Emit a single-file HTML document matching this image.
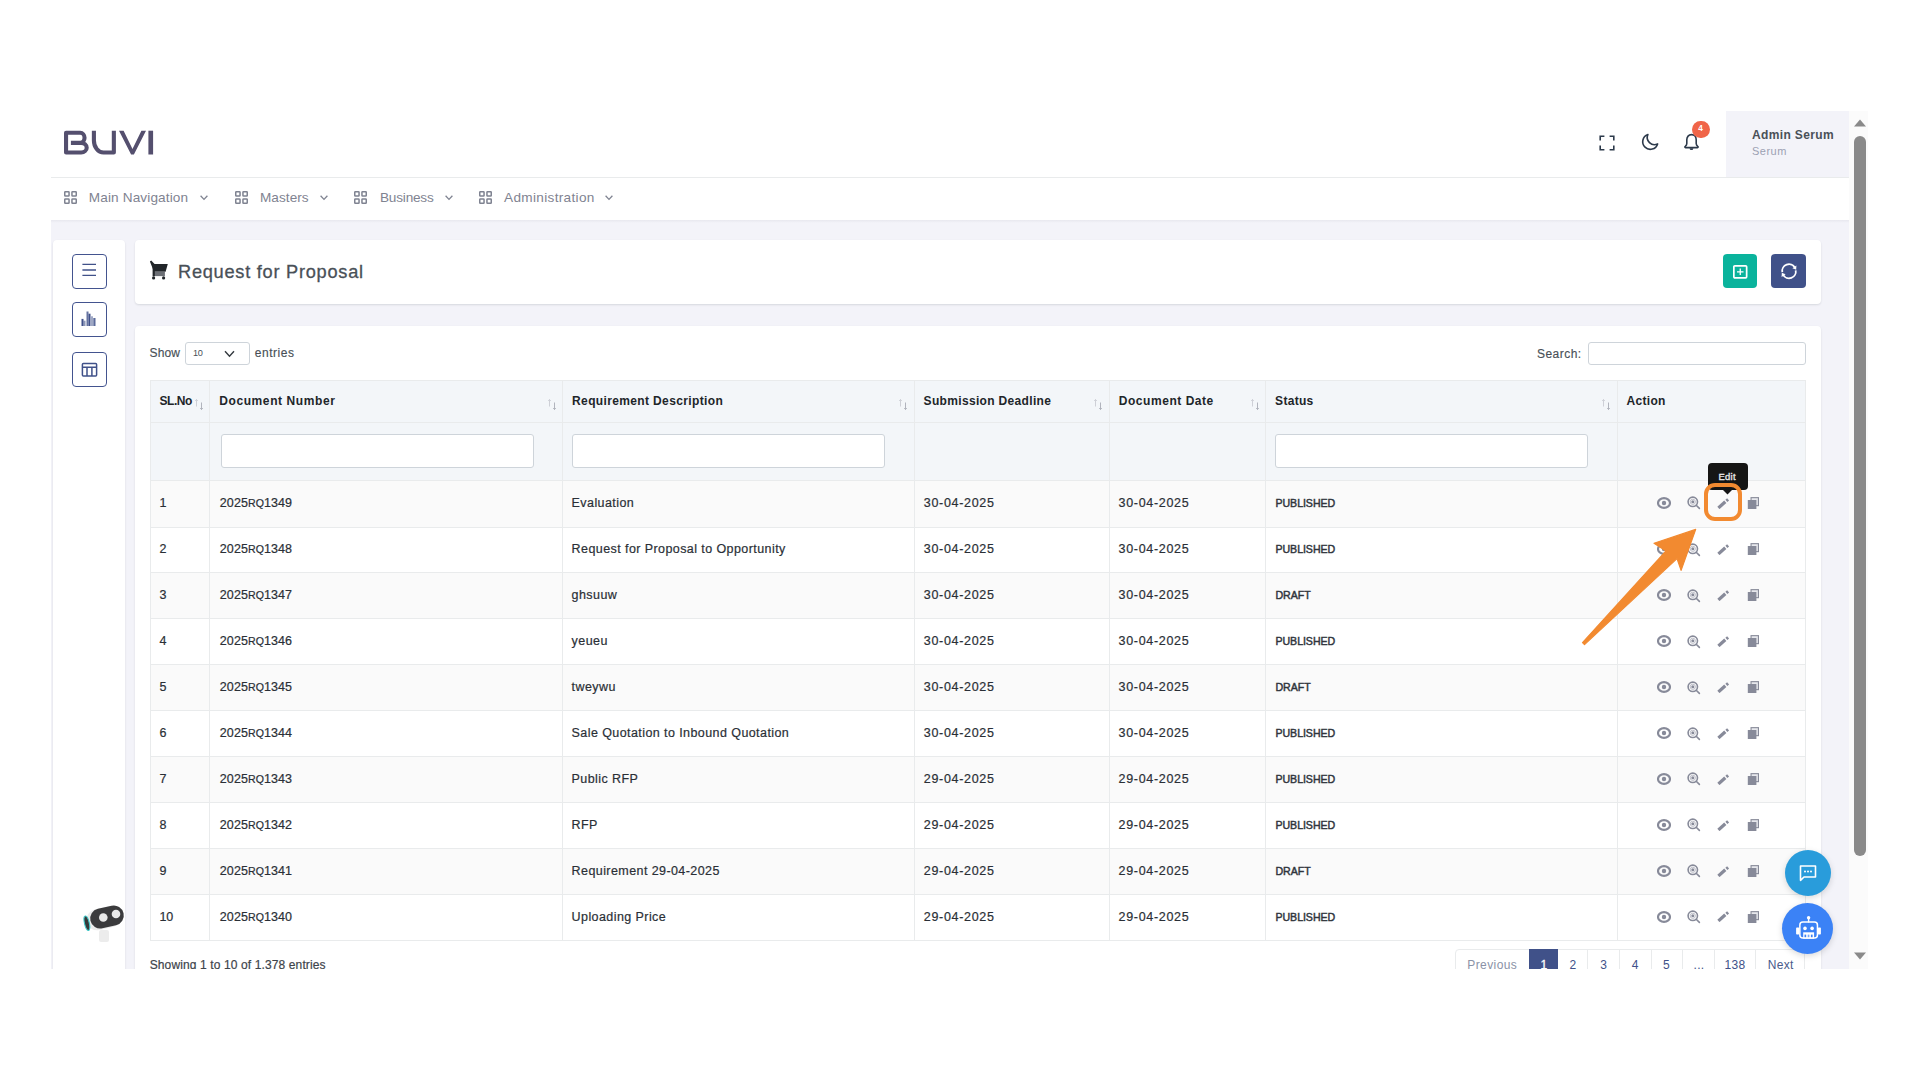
<!DOCTYPE html>
<html><head><meta charset="utf-8">
<style>
*{box-sizing:border-box;margin:0;padding:0}
html,body{width:1920px;height:1080px;overflow:hidden;background:#fff;font-family:"Liberation Sans",sans-serif}
.a{position:absolute}
.t{position:absolute;white-space:nowrap;font-family:"Liberation Sans",sans-serif}
#app{position:absolute;left:51px;top:111px;width:1798px;height:858px;overflow:hidden;background:#f3f3f9}
#track{position:absolute;left:1848.5px;top:111px;width:19px;height:858px;background:#fbfbfb}
</style></head>
<body>
<div id="app">
<div class="a" style="left:0.00px;top:0.00px;width:1798.00px;height:66.00px;background:#fff"></div>
<div class="a" style="left:0.00px;top:66.00px;width:1798.00px;height:1.00px;background:#e9ebec"></div>
<svg class="a" style="left:13.00px;top:19.00px" width="90" height="26" viewBox="0 0 90 26" ><g fill="none" stroke="#544f6e" stroke-width="4.1" stroke-linejoin="round">
<path d="M6.9 12.85H17.2A5.5 4.8 0 0 1 17.2 22.45H2.05V2.75H16.2A4.35 5.05 0 0 1 16.2 12.85"/>
<path d="M29.9 0.7V10.4A9.6 12.05 0 0 0 39.5 22.45H49.85V0.7"/>
</g><g fill="#544f6e">
<path d="M55 0.7h4.6l8.9 18.3l8.9-18.3h4.6L69.9 24.5h-2.8z"/>
<path d="M84.4 0.7h4.7v23.8h-4.7z"/>
</g></svg>
<svg class="a" style="left:1548.00px;top:24.00px" width="16" height="16" viewBox="0 0 16 16" ><path d="M1.2 5.4V1.2h4.2M10.6 1.2h4.2v4.2M14.8 10.6v4.2h-4.2M5.4 14.8H1.2v-4.2" fill="none" stroke="#2d3a4b" stroke-width="1.6"/></svg>
<svg class="a" style="left:1590.00px;top:22.00px" width="19" height="19" viewBox="0 0 19 19" ><path d="M6.9 1.5A7.6 7.6 0 1 0 16.6 10.9A7.2 7.2 0 0 1 6.9 1.5z" fill="none" stroke="#2d3a4b" stroke-width="1.6" stroke-linejoin="round"/></svg>
<svg class="a" style="left:1632.00px;top:22.00px" width="18" height="19" viewBox="0 0 18 19" ><path d="M8.5 1.6c2.9 0 4.7 2.3 4.7 5.2v3.6c0 1.2 0.6 2.2 1.6 2.9c0.6 0.4 0.4 1.3-0.3 1.3H2.5c-0.7 0-0.9-0.9-0.3-1.3c1-0.7 1.6-1.7 1.6-2.9V6.8c0-2.9 1.8-5.2 4.7-5.2z" fill="none" stroke="#2d3a4b" stroke-width="1.6" stroke-linejoin="round"/><path d="M6.6 15.2a1.9 1.9 0 0 0 3.8 0z" fill="#2d3a4b"/></svg>
<div class="a" style="left:1641.00px;top:9.50px;width:17.50px;height:17.50px;background:#f06548;border-radius:50%"></div>
<div class="t" style="left:1647.30px;top:14.26px;font-size:8.2px;line-height:8.2px;color:#fff;font-weight:700;letter-spacing:0px;">4</div>
<div class="a" style="left:1675.00px;top:0.00px;width:123.00px;height:66.00px;background:#f3f3f9"></div>
<div class="t" style="left:1701.00px;top:17.74px;font-size:12px;line-height:12px;color:#495057;font-weight:700;letter-spacing:0.36px;">Admin Serum</div>
<div class="t" style="left:1701.00px;top:35.19px;font-size:11px;line-height:11px;color:#9ca1b3;font-weight:400;letter-spacing:0.5px;">Serum</div>
<div class="a" style="left:0.00px;top:67.00px;width:1798.00px;height:42.00px;background:#fff"></div>
<svg class="a" style="left:13.00px;top:80.00px" width="13" height="13" viewBox="0 0 13 13" ><g fill="none" stroke="#7f8391" stroke-width="1.5"><rect x="0.75" y="0.75" width="4.3" height="4.3" rx="0.6"/><rect x="7.95" y="0.75" width="4.3" height="4.3" rx="0.6"/><rect x="0.75" y="7.95" width="4.3" height="4.3" rx="0.6"/><rect x="7.95" y="7.95" width="4.3" height="4.3" rx="0.6"/></g></svg>
<div class="t" style="left:37.80px;top:80.39px;font-size:13.6px;line-height:13.6px;color:#7f8391;font-weight:400;letter-spacing:0.13px;">Main Navigation</div>
<svg class="a" style="left:149.00px;top:84.00px" width="8" height="6" viewBox="0 0 8 6" ><path d="M0.6 0.8L4 4.4L7.4 0.8" fill="none" stroke="#7f8391" stroke-width="1.3"/></svg>
<svg class="a" style="left:184.00px;top:80.00px" width="13" height="13" viewBox="0 0 13 13" ><g fill="none" stroke="#7f8391" stroke-width="1.5"><rect x="0.75" y="0.75" width="4.3" height="4.3" rx="0.6"/><rect x="7.95" y="0.75" width="4.3" height="4.3" rx="0.6"/><rect x="0.75" y="7.95" width="4.3" height="4.3" rx="0.6"/><rect x="7.95" y="7.95" width="4.3" height="4.3" rx="0.6"/></g></svg>
<div class="t" style="left:209.00px;top:80.39px;font-size:13.6px;line-height:13.6px;color:#7f8391;font-weight:400;letter-spacing:0.05px;">Masters</div>
<svg class="a" style="left:269.40px;top:84.00px" width="8" height="6" viewBox="0 0 8 6" ><path d="M0.6 0.8L4 4.4L7.4 0.8" fill="none" stroke="#7f8391" stroke-width="1.3"/></svg>
<svg class="a" style="left:303.30px;top:80.00px" width="13" height="13" viewBox="0 0 13 13" ><g fill="none" stroke="#7f8391" stroke-width="1.5"><rect x="0.75" y="0.75" width="4.3" height="4.3" rx="0.6"/><rect x="7.95" y="0.75" width="4.3" height="4.3" rx="0.6"/><rect x="0.75" y="7.95" width="4.3" height="4.3" rx="0.6"/><rect x="7.95" y="7.95" width="4.3" height="4.3" rx="0.6"/></g></svg>
<div class="t" style="left:329.00px;top:80.39px;font-size:13.6px;line-height:13.6px;color:#7f8391;font-weight:400;letter-spacing:-0.2px;">Business</div>
<svg class="a" style="left:394.30px;top:84.00px" width="8" height="6" viewBox="0 0 8 6" ><path d="M0.6 0.8L4 4.4L7.4 0.8" fill="none" stroke="#7f8391" stroke-width="1.3"/></svg>
<svg class="a" style="left:428.30px;top:80.00px" width="13" height="13" viewBox="0 0 13 13" ><g fill="none" stroke="#7f8391" stroke-width="1.5"><rect x="0.75" y="0.75" width="4.3" height="4.3" rx="0.6"/><rect x="7.95" y="0.75" width="4.3" height="4.3" rx="0.6"/><rect x="0.75" y="7.95" width="4.3" height="4.3" rx="0.6"/><rect x="7.95" y="7.95" width="4.3" height="4.3" rx="0.6"/></g></svg>
<div class="t" style="left:453.00px;top:80.39px;font-size:13.6px;line-height:13.6px;color:#7f8391;font-weight:400;letter-spacing:0.33px;">Administration</div>
<svg class="a" style="left:554.40px;top:84.00px" width="8" height="6" viewBox="0 0 8 6" ><path d="M0.6 0.8L4 4.4L7.4 0.8" fill="none" stroke="#7f8391" stroke-width="1.3"/></svg>
<div class="a" style="left:0.00px;top:109.00px;width:1798.00px;height:3.00px;background:linear-gradient(#e8e8ef,#f3f3f9)"></div>
<div class="a" style="left:2.00px;top:129.00px;width:72.00px;height:760.00px;background:#fff;border-radius:4px 4px 0 0;box-shadow:0 1px 2px rgba(56,65,74,.15)"></div>
<div class="a" style="left:21.20px;top:143.00px;width:34.60px;height:34.50px;border:1.5px solid #43548f;border-radius:4px"></div>
<div class="a" style="left:21.20px;top:191.40px;width:34.60px;height:34.50px;border:1.5px solid #43548f;border-radius:4px"></div>
<div class="a" style="left:21.20px;top:241.20px;width:34.60px;height:34.50px;border:1.5px solid #43548f;border-radius:4px"></div>
<svg class="a" style="left:31.00px;top:152.00px" width="15" height="14" viewBox="0 0 15 14" ><g stroke="#405189" stroke-width="1.3"><path d="M0.4 1.4H14M0.4 7H14M0.4 12.4H14"/></g></svg>
<svg class="a" style="left:30.00px;top:200.00px" width="16" height="16" viewBox="0 0 16 16" ><g fill="#405189"><rect x="0.5" y="7.9" width="2" height="7.1"/><rect x="2.5" y="9.7" width="2" height="5.3" opacity=".6"/><rect x="5.5" y="0.5" width="2" height="14.5" opacity=".8"/><rect x="7.5" y="2.7" width="2" height="12.3"/><rect x="10" y="5.3" width="2" height="9.7" opacity=".5"/><rect x="12.3" y="7" width="2.2" height="8" opacity=".85"/></g></svg>
<svg class="a" style="left:30.00px;top:251.00px" width="17" height="15" viewBox="0 0 17 15" ><g fill="none" stroke="#405189" stroke-width="1.5"><rect x="1.4" y="1.4" width="14.2" height="12.6" rx="1"/><path d="M1.4 5.2H15.6M6 5.2V14M10.9 5.2V14"/></g></svg>
<svg class="a" style="left:29.00px;top:789.00px" width="48" height="46" viewBox="0 0 48 46" ><g transform="rotate(-13 27 17)">
<rect x="6" y="7" width="36" height="21" rx="10.5" fill="#ececec"/>
<rect x="10" y="7" width="34" height="20" rx="10" fill="#3b3b3d"/>
<ellipse cx="6" cy="18.5" rx="2.4" ry="7.4" fill="#36393a" stroke="#3cc8c8" stroke-width="1.1"/>
</g>
<circle cx="23.3" cy="17.5" r="4.3" fill="#eaeaea"/><circle cx="36" cy="14" r="4.3" fill="#eaeaea"/>
<rect x="19" y="30" width="10" height="12" rx="2" fill="#ececec"/></svg>
<div class="a" style="left:84.00px;top:129.00px;width:1686.00px;height:64.00px;background:#fff;border-radius:4px;box-shadow:0 1px 2px rgba(56,65,74,.15)"></div>
<svg class="a" style="left:98.00px;top:149.00px" width="20" height="20" viewBox="0 0 20 20" ><g fill="#212529"><path d="M0.9 1.6l1.3-1.1l3.4 3.6h13.2l-2.2 7.6H5z"/><path d="M4.6 11.5h11.3v4.6H4.6z" fill="#6c6f75"/><path d="M3.6 4h2.2v12.2H3.6z"/><circle cx="4.6" cy="17.9" r="1.6"/><circle cx="14.6" cy="17.9" r="1.6"/></g></svg>
<div class="t" style="left:127.00px;top:151.99px;font-size:18.2px;line-height:18.2px;color:#495057;font-weight:400;letter-spacing:0.75px;-webkit-text-stroke:0.3px #495057;">Request for Proposal</div>
<div class="a" style="left:1671.80px;top:143.00px;width:34.40px;height:34.40px;background:#0ab39c;border-radius:4px"></div>
<svg class="a" style="left:1680.00px;top:152.00px" width="18" height="18" viewBox="0 0 18 18" ><g fill="none" stroke="#fff" stroke-width="1.7"><rect x="2.85" y="2.85" width="12.8" height="12" rx="1"/></g><path d="M9.25 5.6v6.5M6 8.85h6.5" stroke="#fff" stroke-width="1.3"/></svg>
<div class="a" style="left:1720.20px;top:143.00px;width:34.40px;height:34.40px;background:#405189;border-radius:4px"></div>
<svg class="a" style="left:1729.00px;top:151.00px" width="18" height="18" viewBox="0 0 18 18" ><g fill="none" stroke="#fff" stroke-width="1.8"><path d="M2.3 10.2A6.8 6.8 0 0 1 14.9 5.6"/><path d="M15.7 8.3A6.8 6.8 0 0 1 3.1 12.9"/></g><path d="M16.4 3.4l-0.2 4.4l-3.8-1.6z" fill="#fff"/><path d="M1.6 15.1l0.2-4.4l3.8 1.6z" fill="#fff"/></svg>
<div class="a" style="left:84.00px;top:214.80px;width:1686.00px;height:674.20px;background:#fff;border-radius:4px 4px 0 0;box-shadow:0 1px 2px rgba(56,65,74,.15)"></div>
<div class="t" style="left:98.60px;top:236.24px;font-size:12px;line-height:12px;color:#495057;font-weight:400;letter-spacing:0.1px;-webkit-text-stroke:0.15px #495057;">Show</div>
<div class="a" style="left:133.70px;top:230.60px;width:65.70px;height:23.90px;border:1px solid #ced4da;border-radius:3px;background:#fff"></div>
<div class="t" style="left:142.00px;top:237.61px;font-size:9.2px;line-height:9.2px;color:#495057;font-weight:400;letter-spacing:-0.4px;">10</div>
<svg class="a" style="left:172.50px;top:238.50px" width="12" height="8" viewBox="0 0 12 8" ><path d="M1 1.2L5.5 6.2L10 1.2" fill="none" stroke="#343a40" stroke-width="1.4"/></svg>
<div class="t" style="left:203.80px;top:236.24px;font-size:12px;line-height:12px;color:#495057;font-weight:400;letter-spacing:0.52px;-webkit-text-stroke:0.15px #495057;">entries</div>
<div class="t" style="left:1486.00px;top:237.14px;font-size:12px;line-height:12px;color:#495057;font-weight:400;letter-spacing:0.47px;-webkit-text-stroke:0.15px #495057;">Search:</div>
<div class="a" style="left:1536.90px;top:230.60px;width:217.70px;height:23.90px;border:1px solid #ced4da;border-radius:3px;background:#fff"></div>
<div class="a" style="left:99.00px;top:269.40px;width:1655.60px;height:100.00px;background:#f3f6f9"></div>
<div class="a" style="left:99.00px;top:369.30px;width:1655.60px;height:46.70px;background:#fafafa"></div>
<div class="a" style="left:99.00px;top:416.00px;width:1655.60px;height:45.94px;background:#fff"></div>
<div class="a" style="left:99.00px;top:461.94px;width:1655.60px;height:45.94px;background:#fafafa"></div>
<div class="a" style="left:99.00px;top:507.88px;width:1655.60px;height:45.94px;background:#fff"></div>
<div class="a" style="left:99.00px;top:553.82px;width:1655.60px;height:45.94px;background:#fafafa"></div>
<div class="a" style="left:99.00px;top:599.76px;width:1655.60px;height:45.94px;background:#fff"></div>
<div class="a" style="left:99.00px;top:645.70px;width:1655.60px;height:45.94px;background:#fafafa"></div>
<div class="a" style="left:99.00px;top:691.64px;width:1655.60px;height:45.94px;background:#fff"></div>
<div class="a" style="left:99.00px;top:737.58px;width:1655.60px;height:45.94px;background:#fafafa"></div>
<div class="a" style="left:99.00px;top:783.52px;width:1655.60px;height:45.94px;background:#fff"></div>
<div class="a" style="left:99.00px;top:268.90px;width:1655.60px;height:1.00px;background:#e9ebec"></div>
<div class="a" style="left:99.00px;top:310.70px;width:1655.60px;height:1.00px;background:#e9ebec"></div>
<div class="a" style="left:99.00px;top:368.90px;width:1655.60px;height:1.00px;background:#e9ebec"></div>
<div class="a" style="left:99.00px;top:415.50px;width:1655.60px;height:1.00px;background:#e9ebec"></div>
<div class="a" style="left:99.00px;top:461.44px;width:1655.60px;height:1.00px;background:#e9ebec"></div>
<div class="a" style="left:99.00px;top:507.38px;width:1655.60px;height:1.00px;background:#e9ebec"></div>
<div class="a" style="left:99.00px;top:553.32px;width:1655.60px;height:1.00px;background:#e9ebec"></div>
<div class="a" style="left:99.00px;top:599.26px;width:1655.60px;height:1.00px;background:#e9ebec"></div>
<div class="a" style="left:99.00px;top:645.20px;width:1655.60px;height:1.00px;background:#e9ebec"></div>
<div class="a" style="left:99.00px;top:691.14px;width:1655.60px;height:1.00px;background:#e9ebec"></div>
<div class="a" style="left:99.00px;top:737.08px;width:1655.60px;height:1.00px;background:#e9ebec"></div>
<div class="a" style="left:99.00px;top:783.02px;width:1655.60px;height:1.00px;background:#e9ebec"></div>
<div class="a" style="left:99.00px;top:828.96px;width:1655.60px;height:1.00px;background:#e9ebec"></div>
<div class="a" style="left:98.50px;top:269.40px;width:1.00px;height:560.56px;background:#e9ebec"></div>
<div class="a" style="left:158.10px;top:269.40px;width:1.00px;height:560.56px;background:#e9ebec"></div>
<div class="a" style="left:511.00px;top:269.40px;width:1.00px;height:560.56px;background:#e9ebec"></div>
<div class="a" style="left:862.50px;top:269.40px;width:1.00px;height:560.56px;background:#e9ebec"></div>
<div class="a" style="left:1057.70px;top:269.40px;width:1.00px;height:560.56px;background:#e9ebec"></div>
<div class="a" style="left:1214.00px;top:269.40px;width:1.00px;height:560.56px;background:#e9ebec"></div>
<div class="a" style="left:1565.50px;top:269.40px;width:1.00px;height:560.56px;background:#e9ebec"></div>
<div class="a" style="left:1754.10px;top:269.40px;width:1.00px;height:560.56px;background:#e9ebec"></div>
<div class="t" style="left:108.60px;top:283.64px;font-size:12px;line-height:12px;color:#212529;font-weight:700;letter-spacing:-0.5px;">SL.No</div>
<div class="t" style="left:168.20px;top:283.64px;font-size:12px;line-height:12px;color:#212529;font-weight:700;letter-spacing:0.6px;">Document Number</div>
<div class="t" style="left:521.10px;top:283.64px;font-size:12px;line-height:12px;color:#212529;font-weight:700;letter-spacing:0.36px;">Requirement Description</div>
<div class="t" style="left:872.60px;top:283.64px;font-size:12px;line-height:12px;color:#212529;font-weight:700;letter-spacing:0.33px;">Submission Deadline</div>
<div class="t" style="left:1067.80px;top:283.64px;font-size:12px;line-height:12px;color:#212529;font-weight:700;letter-spacing:0.54px;">Document Date</div>
<div class="t" style="left:1224.10px;top:283.64px;font-size:12px;line-height:12px;color:#212529;font-weight:700;letter-spacing:0.3px;">Status</div>
<div class="t" style="left:1575.60px;top:283.64px;font-size:12px;line-height:12px;color:#212529;font-weight:700;letter-spacing:0.3px;">Action</div>
<svg class="a" style="left:142.60px;top:287.00px" width="10" height="13" viewBox="0 0 10 13" ><g stroke="#c9ccd3" stroke-width="0.9" fill="none"><path d="M2.5 8.5V1.5M1.2 2.9L2.5 1.5L3.8 2.9"/></g><g stroke="#a9adb6" stroke-width="0.9" fill="none"><path d="M7.5 4.5V11.5M6.2 10.1L7.5 11.5L8.8 10.1"/></g></svg>
<svg class="a" style="left:495.50px;top:287.00px" width="10" height="13" viewBox="0 0 10 13" ><g stroke="#c9ccd3" stroke-width="0.9" fill="none"><path d="M2.5 8.5V1.5M1.2 2.9L2.5 1.5L3.8 2.9"/></g><g stroke="#a9adb6" stroke-width="0.9" fill="none"><path d="M7.5 4.5V11.5M6.2 10.1L7.5 11.5L8.8 10.1"/></g></svg>
<svg class="a" style="left:847.00px;top:287.00px" width="10" height="13" viewBox="0 0 10 13" ><g stroke="#c9ccd3" stroke-width="0.9" fill="none"><path d="M2.5 8.5V1.5M1.2 2.9L2.5 1.5L3.8 2.9"/></g><g stroke="#a9adb6" stroke-width="0.9" fill="none"><path d="M7.5 4.5V11.5M6.2 10.1L7.5 11.5L8.8 10.1"/></g></svg>
<svg class="a" style="left:1042.20px;top:287.00px" width="10" height="13" viewBox="0 0 10 13" ><g stroke="#c9ccd3" stroke-width="0.9" fill="none"><path d="M2.5 8.5V1.5M1.2 2.9L2.5 1.5L3.8 2.9"/></g><g stroke="#a9adb6" stroke-width="0.9" fill="none"><path d="M7.5 4.5V11.5M6.2 10.1L7.5 11.5L8.8 10.1"/></g></svg>
<svg class="a" style="left:1198.50px;top:287.00px" width="10" height="13" viewBox="0 0 10 13" ><g stroke="#c9ccd3" stroke-width="0.9" fill="none"><path d="M2.5 8.5V1.5M1.2 2.9L2.5 1.5L3.8 2.9"/></g><g stroke="#a9adb6" stroke-width="0.9" fill="none"><path d="M7.5 4.5V11.5M6.2 10.1L7.5 11.5L8.8 10.1"/></g></svg>
<svg class="a" style="left:1550.00px;top:287.00px" width="10" height="13" viewBox="0 0 10 13" ><g stroke="#c9ccd3" stroke-width="0.9" fill="none"><path d="M2.5 8.5V1.5M1.2 2.9L2.5 1.5L3.8 2.9"/></g><g stroke="#a9adb6" stroke-width="0.9" fill="none"><path d="M7.5 4.5V11.5M6.2 10.1L7.5 11.5L8.8 10.1"/></g></svg>
<div class="a" style="left:169.60px;top:323.40px;width:313.00px;height:33.40px;border:1px solid #ced4da;border-radius:3px;background:#fff"></div>
<div class="a" style="left:521.00px;top:323.40px;width:313.00px;height:33.40px;border:1px solid #ced4da;border-radius:3px;background:#fff"></div>
<div class="a" style="left:1224.00px;top:323.40px;width:313.00px;height:33.40px;border:1px solid #ced4da;border-radius:3px;background:#fff"></div>
<div class="t" style="left:108.40px;top:385.77px;font-size:12.5px;line-height:12.5px;color:#2a2f36;font-weight:400;letter-spacing:0px;-webkit-text-stroke:0.2px #2a2f36;">1</div>
<div class="t" style="left:168.80px;top:385.77px;font-size:12.5px;line-height:12.5px;color:#2a2f36;letter-spacing:0.1px;-webkit-text-stroke:0.2px #2a2f36">2025<span style="font-size:10.6px;letter-spacing:0">RQ</span>1349</div>
<div class="t" style="left:520.60px;top:385.77px;font-size:12.5px;line-height:12.5px;color:#2a2f36;font-weight:400;letter-spacing:0.42px;-webkit-text-stroke:0.2px #2a2f36;">Evaluation</div>
<div class="t" style="left:872.80px;top:385.77px;font-size:12.5px;line-height:12.5px;color:#2a2f36;font-weight:400;letter-spacing:0.68px;-webkit-text-stroke:0.2px #2a2f36;">30-04-2025</div>
<div class="t" style="left:1067.60px;top:385.77px;font-size:12.5px;line-height:12.5px;color:#2a2f36;font-weight:400;letter-spacing:0.68px;-webkit-text-stroke:0.2px #2a2f36;">30-04-2025</div>
<div class="t" style="left:1224.50px;top:386.78px;font-size:10.6px;line-height:10.6px;color:#30353c;font-weight:400;letter-spacing:-0.05px;-webkit-text-stroke:0.45px #30353c;">PUBLISHED</div>
<svg class="a" style="left:1606.00px;top:386.15px" width="14" height="12" viewBox="0 0 14 12" ><ellipse cx="7" cy="6" rx="6" ry="4.9" fill="none" stroke="#878a99" stroke-width="2.2"/><circle cx="7" cy="6" r="2.2" fill="#878a99"/></svg>
<svg class="a" style="left:1636.00px;top:385.45px" width="14" height="14" viewBox="0 0 14 14" ><circle cx="5.8" cy="5.8" r="4.7" fill="none" stroke="#878a99" stroke-width="1.6"/><path d="M9.2 9.2L12.4 12.4" stroke="#878a99" stroke-width="1.6" stroke-linecap="round"/><circle cx="5.8" cy="5.8" r="2.6" fill="none" stroke="#b4b6c2" stroke-width="0.9"/><circle cx="5.8" cy="5.8" r="1.5" fill="#878a99"/></svg>
<svg class="a" style="left:1666.00px;top:384.65px" width="13" height="13" viewBox="0 0 13 13" ><path d="M1.4 11.9L8.3 5.8" stroke="#878a99" stroke-width="3.3"/><path d="M9.4 4.8L11.1 3.3" stroke="#878a99" stroke-width="3"/></svg>
<svg class="a" style="left:1696.00px;top:385.15px" width="13" height="14" viewBox="0 0 13 14" ><rect x="4.05" y="1.65" width="7.4" height="8" fill="#e6e7ec" stroke="#878a99" stroke-width="1.1"/><rect x="0.8" y="4" width="8.6" height="9" fill="#878a99"/></svg>
<div class="t" style="left:108.40px;top:432.09px;font-size:12.5px;line-height:12.5px;color:#2a2f36;font-weight:400;letter-spacing:0px;-webkit-text-stroke:0.2px #2a2f36;">2</div>
<div class="t" style="left:168.80px;top:432.09px;font-size:12.5px;line-height:12.5px;color:#2a2f36;letter-spacing:0.1px;-webkit-text-stroke:0.2px #2a2f36">2025<span style="font-size:10.6px;letter-spacing:0">RQ</span>1348</div>
<div class="t" style="left:520.60px;top:432.09px;font-size:12.5px;line-height:12.5px;color:#2a2f36;font-weight:400;letter-spacing:0.42px;-webkit-text-stroke:0.2px #2a2f36;">Request for Proposal to Opportunity</div>
<div class="t" style="left:872.80px;top:432.09px;font-size:12.5px;line-height:12.5px;color:#2a2f36;font-weight:400;letter-spacing:0.68px;-webkit-text-stroke:0.2px #2a2f36;">30-04-2025</div>
<div class="t" style="left:1067.60px;top:432.09px;font-size:12.5px;line-height:12.5px;color:#2a2f36;font-weight:400;letter-spacing:0.68px;-webkit-text-stroke:0.2px #2a2f36;">30-04-2025</div>
<div class="t" style="left:1224.50px;top:433.10px;font-size:10.6px;line-height:10.6px;color:#30353c;font-weight:400;letter-spacing:-0.05px;-webkit-text-stroke:0.45px #30353c;">PUBLISHED</div>
<svg class="a" style="left:1606.00px;top:432.47px" width="14" height="12" viewBox="0 0 14 12" ><ellipse cx="7" cy="6" rx="6" ry="4.9" fill="none" stroke="#878a99" stroke-width="2.2"/><circle cx="7" cy="6" r="2.2" fill="#878a99"/></svg>
<svg class="a" style="left:1636.00px;top:431.77px" width="14" height="14" viewBox="0 0 14 14" ><circle cx="5.8" cy="5.8" r="4.7" fill="none" stroke="#878a99" stroke-width="1.6"/><path d="M9.2 9.2L12.4 12.4" stroke="#878a99" stroke-width="1.6" stroke-linecap="round"/><circle cx="5.8" cy="5.8" r="2.6" fill="none" stroke="#b4b6c2" stroke-width="0.9"/><circle cx="5.8" cy="5.8" r="1.5" fill="#878a99"/></svg>
<svg class="a" style="left:1666.00px;top:430.97px" width="13" height="13" viewBox="0 0 13 13" ><path d="M1.4 11.9L8.3 5.8" stroke="#878a99" stroke-width="3.3"/><path d="M9.4 4.8L11.1 3.3" stroke="#878a99" stroke-width="3"/></svg>
<svg class="a" style="left:1696.00px;top:431.47px" width="13" height="14" viewBox="0 0 13 14" ><rect x="4.05" y="1.65" width="7.4" height="8" fill="#e6e7ec" stroke="#878a99" stroke-width="1.1"/><rect x="0.8" y="4" width="8.6" height="9" fill="#878a99"/></svg>
<div class="t" style="left:108.40px;top:478.03px;font-size:12.5px;line-height:12.5px;color:#2a2f36;font-weight:400;letter-spacing:0px;-webkit-text-stroke:0.2px #2a2f36;">3</div>
<div class="t" style="left:168.80px;top:478.03px;font-size:12.5px;line-height:12.5px;color:#2a2f36;letter-spacing:0.1px;-webkit-text-stroke:0.2px #2a2f36">2025<span style="font-size:10.6px;letter-spacing:0">RQ</span>1347</div>
<div class="t" style="left:520.60px;top:478.03px;font-size:12.5px;line-height:12.5px;color:#2a2f36;font-weight:400;letter-spacing:0.42px;-webkit-text-stroke:0.2px #2a2f36;">ghsuuw</div>
<div class="t" style="left:872.80px;top:478.03px;font-size:12.5px;line-height:12.5px;color:#2a2f36;font-weight:400;letter-spacing:0.68px;-webkit-text-stroke:0.2px #2a2f36;">30-04-2025</div>
<div class="t" style="left:1067.60px;top:478.03px;font-size:12.5px;line-height:12.5px;color:#2a2f36;font-weight:400;letter-spacing:0.68px;-webkit-text-stroke:0.2px #2a2f36;">30-04-2025</div>
<div class="t" style="left:1224.50px;top:479.04px;font-size:10.6px;line-height:10.6px;color:#30353c;font-weight:400;letter-spacing:-0.05px;-webkit-text-stroke:0.45px #30353c;">DRAFT</div>
<svg class="a" style="left:1606.00px;top:478.41px" width="14" height="12" viewBox="0 0 14 12" ><ellipse cx="7" cy="6" rx="6" ry="4.9" fill="none" stroke="#878a99" stroke-width="2.2"/><circle cx="7" cy="6" r="2.2" fill="#878a99"/></svg>
<svg class="a" style="left:1636.00px;top:477.71px" width="14" height="14" viewBox="0 0 14 14" ><circle cx="5.8" cy="5.8" r="4.7" fill="none" stroke="#878a99" stroke-width="1.6"/><path d="M9.2 9.2L12.4 12.4" stroke="#878a99" stroke-width="1.6" stroke-linecap="round"/><circle cx="5.8" cy="5.8" r="2.6" fill="none" stroke="#b4b6c2" stroke-width="0.9"/><circle cx="5.8" cy="5.8" r="1.5" fill="#878a99"/></svg>
<svg class="a" style="left:1666.00px;top:476.91px" width="13" height="13" viewBox="0 0 13 13" ><path d="M1.4 11.9L8.3 5.8" stroke="#878a99" stroke-width="3.3"/><path d="M9.4 4.8L11.1 3.3" stroke="#878a99" stroke-width="3"/></svg>
<svg class="a" style="left:1696.00px;top:477.41px" width="13" height="14" viewBox="0 0 13 14" ><rect x="4.05" y="1.65" width="7.4" height="8" fill="#e6e7ec" stroke="#878a99" stroke-width="1.1"/><rect x="0.8" y="4" width="8.6" height="9" fill="#878a99"/></svg>
<div class="t" style="left:108.40px;top:523.97px;font-size:12.5px;line-height:12.5px;color:#2a2f36;font-weight:400;letter-spacing:0px;-webkit-text-stroke:0.2px #2a2f36;">4</div>
<div class="t" style="left:168.80px;top:523.97px;font-size:12.5px;line-height:12.5px;color:#2a2f36;letter-spacing:0.1px;-webkit-text-stroke:0.2px #2a2f36">2025<span style="font-size:10.6px;letter-spacing:0">RQ</span>1346</div>
<div class="t" style="left:520.60px;top:523.97px;font-size:12.5px;line-height:12.5px;color:#2a2f36;font-weight:400;letter-spacing:0.42px;-webkit-text-stroke:0.2px #2a2f36;">yeueu</div>
<div class="t" style="left:872.80px;top:523.97px;font-size:12.5px;line-height:12.5px;color:#2a2f36;font-weight:400;letter-spacing:0.68px;-webkit-text-stroke:0.2px #2a2f36;">30-04-2025</div>
<div class="t" style="left:1067.60px;top:523.97px;font-size:12.5px;line-height:12.5px;color:#2a2f36;font-weight:400;letter-spacing:0.68px;-webkit-text-stroke:0.2px #2a2f36;">30-04-2025</div>
<div class="t" style="left:1224.50px;top:524.98px;font-size:10.6px;line-height:10.6px;color:#30353c;font-weight:400;letter-spacing:-0.05px;-webkit-text-stroke:0.45px #30353c;">PUBLISHED</div>
<svg class="a" style="left:1606.00px;top:524.35px" width="14" height="12" viewBox="0 0 14 12" ><ellipse cx="7" cy="6" rx="6" ry="4.9" fill="none" stroke="#878a99" stroke-width="2.2"/><circle cx="7" cy="6" r="2.2" fill="#878a99"/></svg>
<svg class="a" style="left:1636.00px;top:523.65px" width="14" height="14" viewBox="0 0 14 14" ><circle cx="5.8" cy="5.8" r="4.7" fill="none" stroke="#878a99" stroke-width="1.6"/><path d="M9.2 9.2L12.4 12.4" stroke="#878a99" stroke-width="1.6" stroke-linecap="round"/><circle cx="5.8" cy="5.8" r="2.6" fill="none" stroke="#b4b6c2" stroke-width="0.9"/><circle cx="5.8" cy="5.8" r="1.5" fill="#878a99"/></svg>
<svg class="a" style="left:1666.00px;top:522.85px" width="13" height="13" viewBox="0 0 13 13" ><path d="M1.4 11.9L8.3 5.8" stroke="#878a99" stroke-width="3.3"/><path d="M9.4 4.8L11.1 3.3" stroke="#878a99" stroke-width="3"/></svg>
<svg class="a" style="left:1696.00px;top:523.35px" width="13" height="14" viewBox="0 0 13 14" ><rect x="4.05" y="1.65" width="7.4" height="8" fill="#e6e7ec" stroke="#878a99" stroke-width="1.1"/><rect x="0.8" y="4" width="8.6" height="9" fill="#878a99"/></svg>
<div class="t" style="left:108.40px;top:569.91px;font-size:12.5px;line-height:12.5px;color:#2a2f36;font-weight:400;letter-spacing:0px;-webkit-text-stroke:0.2px #2a2f36;">5</div>
<div class="t" style="left:168.80px;top:569.91px;font-size:12.5px;line-height:12.5px;color:#2a2f36;letter-spacing:0.1px;-webkit-text-stroke:0.2px #2a2f36">2025<span style="font-size:10.6px;letter-spacing:0">RQ</span>1345</div>
<div class="t" style="left:520.60px;top:569.91px;font-size:12.5px;line-height:12.5px;color:#2a2f36;font-weight:400;letter-spacing:0.42px;-webkit-text-stroke:0.2px #2a2f36;">tweywu</div>
<div class="t" style="left:872.80px;top:569.91px;font-size:12.5px;line-height:12.5px;color:#2a2f36;font-weight:400;letter-spacing:0.68px;-webkit-text-stroke:0.2px #2a2f36;">30-04-2025</div>
<div class="t" style="left:1067.60px;top:569.91px;font-size:12.5px;line-height:12.5px;color:#2a2f36;font-weight:400;letter-spacing:0.68px;-webkit-text-stroke:0.2px #2a2f36;">30-04-2025</div>
<div class="t" style="left:1224.50px;top:570.92px;font-size:10.6px;line-height:10.6px;color:#30353c;font-weight:400;letter-spacing:-0.05px;-webkit-text-stroke:0.45px #30353c;">DRAFT</div>
<svg class="a" style="left:1606.00px;top:570.29px" width="14" height="12" viewBox="0 0 14 12" ><ellipse cx="7" cy="6" rx="6" ry="4.9" fill="none" stroke="#878a99" stroke-width="2.2"/><circle cx="7" cy="6" r="2.2" fill="#878a99"/></svg>
<svg class="a" style="left:1636.00px;top:569.59px" width="14" height="14" viewBox="0 0 14 14" ><circle cx="5.8" cy="5.8" r="4.7" fill="none" stroke="#878a99" stroke-width="1.6"/><path d="M9.2 9.2L12.4 12.4" stroke="#878a99" stroke-width="1.6" stroke-linecap="round"/><circle cx="5.8" cy="5.8" r="2.6" fill="none" stroke="#b4b6c2" stroke-width="0.9"/><circle cx="5.8" cy="5.8" r="1.5" fill="#878a99"/></svg>
<svg class="a" style="left:1666.00px;top:568.79px" width="13" height="13" viewBox="0 0 13 13" ><path d="M1.4 11.9L8.3 5.8" stroke="#878a99" stroke-width="3.3"/><path d="M9.4 4.8L11.1 3.3" stroke="#878a99" stroke-width="3"/></svg>
<svg class="a" style="left:1696.00px;top:569.29px" width="13" height="14" viewBox="0 0 13 14" ><rect x="4.05" y="1.65" width="7.4" height="8" fill="#e6e7ec" stroke="#878a99" stroke-width="1.1"/><rect x="0.8" y="4" width="8.6" height="9" fill="#878a99"/></svg>
<div class="t" style="left:108.40px;top:615.85px;font-size:12.5px;line-height:12.5px;color:#2a2f36;font-weight:400;letter-spacing:0px;-webkit-text-stroke:0.2px #2a2f36;">6</div>
<div class="t" style="left:168.80px;top:615.85px;font-size:12.5px;line-height:12.5px;color:#2a2f36;letter-spacing:0.1px;-webkit-text-stroke:0.2px #2a2f36">2025<span style="font-size:10.6px;letter-spacing:0">RQ</span>1344</div>
<div class="t" style="left:520.60px;top:615.85px;font-size:12.5px;line-height:12.5px;color:#2a2f36;font-weight:400;letter-spacing:0.42px;-webkit-text-stroke:0.2px #2a2f36;">Sale Quotation to Inbound Quotation</div>
<div class="t" style="left:872.80px;top:615.85px;font-size:12.5px;line-height:12.5px;color:#2a2f36;font-weight:400;letter-spacing:0.68px;-webkit-text-stroke:0.2px #2a2f36;">30-04-2025</div>
<div class="t" style="left:1067.60px;top:615.85px;font-size:12.5px;line-height:12.5px;color:#2a2f36;font-weight:400;letter-spacing:0.68px;-webkit-text-stroke:0.2px #2a2f36;">30-04-2025</div>
<div class="t" style="left:1224.50px;top:616.86px;font-size:10.6px;line-height:10.6px;color:#30353c;font-weight:400;letter-spacing:-0.05px;-webkit-text-stroke:0.45px #30353c;">PUBLISHED</div>
<svg class="a" style="left:1606.00px;top:616.23px" width="14" height="12" viewBox="0 0 14 12" ><ellipse cx="7" cy="6" rx="6" ry="4.9" fill="none" stroke="#878a99" stroke-width="2.2"/><circle cx="7" cy="6" r="2.2" fill="#878a99"/></svg>
<svg class="a" style="left:1636.00px;top:615.53px" width="14" height="14" viewBox="0 0 14 14" ><circle cx="5.8" cy="5.8" r="4.7" fill="none" stroke="#878a99" stroke-width="1.6"/><path d="M9.2 9.2L12.4 12.4" stroke="#878a99" stroke-width="1.6" stroke-linecap="round"/><circle cx="5.8" cy="5.8" r="2.6" fill="none" stroke="#b4b6c2" stroke-width="0.9"/><circle cx="5.8" cy="5.8" r="1.5" fill="#878a99"/></svg>
<svg class="a" style="left:1666.00px;top:614.73px" width="13" height="13" viewBox="0 0 13 13" ><path d="M1.4 11.9L8.3 5.8" stroke="#878a99" stroke-width="3.3"/><path d="M9.4 4.8L11.1 3.3" stroke="#878a99" stroke-width="3"/></svg>
<svg class="a" style="left:1696.00px;top:615.23px" width="13" height="14" viewBox="0 0 13 14" ><rect x="4.05" y="1.65" width="7.4" height="8" fill="#e6e7ec" stroke="#878a99" stroke-width="1.1"/><rect x="0.8" y="4" width="8.6" height="9" fill="#878a99"/></svg>
<div class="t" style="left:108.40px;top:661.79px;font-size:12.5px;line-height:12.5px;color:#2a2f36;font-weight:400;letter-spacing:0px;-webkit-text-stroke:0.2px #2a2f36;">7</div>
<div class="t" style="left:168.80px;top:661.79px;font-size:12.5px;line-height:12.5px;color:#2a2f36;letter-spacing:0.1px;-webkit-text-stroke:0.2px #2a2f36">2025<span style="font-size:10.6px;letter-spacing:0">RQ</span>1343</div>
<div class="t" style="left:520.60px;top:661.79px;font-size:12.5px;line-height:12.5px;color:#2a2f36;font-weight:400;letter-spacing:0.42px;-webkit-text-stroke:0.2px #2a2f36;">Public RFP</div>
<div class="t" style="left:872.80px;top:661.79px;font-size:12.5px;line-height:12.5px;color:#2a2f36;font-weight:400;letter-spacing:0.68px;-webkit-text-stroke:0.2px #2a2f36;">29-04-2025</div>
<div class="t" style="left:1067.60px;top:661.79px;font-size:12.5px;line-height:12.5px;color:#2a2f36;font-weight:400;letter-spacing:0.68px;-webkit-text-stroke:0.2px #2a2f36;">29-04-2025</div>
<div class="t" style="left:1224.50px;top:662.80px;font-size:10.6px;line-height:10.6px;color:#30353c;font-weight:400;letter-spacing:-0.05px;-webkit-text-stroke:0.45px #30353c;">PUBLISHED</div>
<svg class="a" style="left:1606.00px;top:662.17px" width="14" height="12" viewBox="0 0 14 12" ><ellipse cx="7" cy="6" rx="6" ry="4.9" fill="none" stroke="#878a99" stroke-width="2.2"/><circle cx="7" cy="6" r="2.2" fill="#878a99"/></svg>
<svg class="a" style="left:1636.00px;top:661.47px" width="14" height="14" viewBox="0 0 14 14" ><circle cx="5.8" cy="5.8" r="4.7" fill="none" stroke="#878a99" stroke-width="1.6"/><path d="M9.2 9.2L12.4 12.4" stroke="#878a99" stroke-width="1.6" stroke-linecap="round"/><circle cx="5.8" cy="5.8" r="2.6" fill="none" stroke="#b4b6c2" stroke-width="0.9"/><circle cx="5.8" cy="5.8" r="1.5" fill="#878a99"/></svg>
<svg class="a" style="left:1666.00px;top:660.67px" width="13" height="13" viewBox="0 0 13 13" ><path d="M1.4 11.9L8.3 5.8" stroke="#878a99" stroke-width="3.3"/><path d="M9.4 4.8L11.1 3.3" stroke="#878a99" stroke-width="3"/></svg>
<svg class="a" style="left:1696.00px;top:661.17px" width="13" height="14" viewBox="0 0 13 14" ><rect x="4.05" y="1.65" width="7.4" height="8" fill="#e6e7ec" stroke="#878a99" stroke-width="1.1"/><rect x="0.8" y="4" width="8.6" height="9" fill="#878a99"/></svg>
<div class="t" style="left:108.40px;top:707.73px;font-size:12.5px;line-height:12.5px;color:#2a2f36;font-weight:400;letter-spacing:0px;-webkit-text-stroke:0.2px #2a2f36;">8</div>
<div class="t" style="left:168.80px;top:707.73px;font-size:12.5px;line-height:12.5px;color:#2a2f36;letter-spacing:0.1px;-webkit-text-stroke:0.2px #2a2f36">2025<span style="font-size:10.6px;letter-spacing:0">RQ</span>1342</div>
<div class="t" style="left:520.60px;top:707.73px;font-size:12.5px;line-height:12.5px;color:#2a2f36;font-weight:400;letter-spacing:0.42px;-webkit-text-stroke:0.2px #2a2f36;">RFP</div>
<div class="t" style="left:872.80px;top:707.73px;font-size:12.5px;line-height:12.5px;color:#2a2f36;font-weight:400;letter-spacing:0.68px;-webkit-text-stroke:0.2px #2a2f36;">29-04-2025</div>
<div class="t" style="left:1067.60px;top:707.73px;font-size:12.5px;line-height:12.5px;color:#2a2f36;font-weight:400;letter-spacing:0.68px;-webkit-text-stroke:0.2px #2a2f36;">29-04-2025</div>
<div class="t" style="left:1224.50px;top:708.74px;font-size:10.6px;line-height:10.6px;color:#30353c;font-weight:400;letter-spacing:-0.05px;-webkit-text-stroke:0.45px #30353c;">PUBLISHED</div>
<svg class="a" style="left:1606.00px;top:708.11px" width="14" height="12" viewBox="0 0 14 12" ><ellipse cx="7" cy="6" rx="6" ry="4.9" fill="none" stroke="#878a99" stroke-width="2.2"/><circle cx="7" cy="6" r="2.2" fill="#878a99"/></svg>
<svg class="a" style="left:1636.00px;top:707.41px" width="14" height="14" viewBox="0 0 14 14" ><circle cx="5.8" cy="5.8" r="4.7" fill="none" stroke="#878a99" stroke-width="1.6"/><path d="M9.2 9.2L12.4 12.4" stroke="#878a99" stroke-width="1.6" stroke-linecap="round"/><circle cx="5.8" cy="5.8" r="2.6" fill="none" stroke="#b4b6c2" stroke-width="0.9"/><circle cx="5.8" cy="5.8" r="1.5" fill="#878a99"/></svg>
<svg class="a" style="left:1666.00px;top:706.61px" width="13" height="13" viewBox="0 0 13 13" ><path d="M1.4 11.9L8.3 5.8" stroke="#878a99" stroke-width="3.3"/><path d="M9.4 4.8L11.1 3.3" stroke="#878a99" stroke-width="3"/></svg>
<svg class="a" style="left:1696.00px;top:707.11px" width="13" height="14" viewBox="0 0 13 14" ><rect x="4.05" y="1.65" width="7.4" height="8" fill="#e6e7ec" stroke="#878a99" stroke-width="1.1"/><rect x="0.8" y="4" width="8.6" height="9" fill="#878a99"/></svg>
<div class="t" style="left:108.40px;top:753.67px;font-size:12.5px;line-height:12.5px;color:#2a2f36;font-weight:400;letter-spacing:0px;-webkit-text-stroke:0.2px #2a2f36;">9</div>
<div class="t" style="left:168.80px;top:753.67px;font-size:12.5px;line-height:12.5px;color:#2a2f36;letter-spacing:0.1px;-webkit-text-stroke:0.2px #2a2f36">2025<span style="font-size:10.6px;letter-spacing:0">RQ</span>1341</div>
<div class="t" style="left:520.60px;top:753.67px;font-size:12.5px;line-height:12.5px;color:#2a2f36;font-weight:400;letter-spacing:0.42px;-webkit-text-stroke:0.2px #2a2f36;">Requirement 29-04-2025</div>
<div class="t" style="left:872.80px;top:753.67px;font-size:12.5px;line-height:12.5px;color:#2a2f36;font-weight:400;letter-spacing:0.68px;-webkit-text-stroke:0.2px #2a2f36;">29-04-2025</div>
<div class="t" style="left:1067.60px;top:753.67px;font-size:12.5px;line-height:12.5px;color:#2a2f36;font-weight:400;letter-spacing:0.68px;-webkit-text-stroke:0.2px #2a2f36;">29-04-2025</div>
<div class="t" style="left:1224.50px;top:754.68px;font-size:10.6px;line-height:10.6px;color:#30353c;font-weight:400;letter-spacing:-0.05px;-webkit-text-stroke:0.45px #30353c;">DRAFT</div>
<svg class="a" style="left:1606.00px;top:754.05px" width="14" height="12" viewBox="0 0 14 12" ><ellipse cx="7" cy="6" rx="6" ry="4.9" fill="none" stroke="#878a99" stroke-width="2.2"/><circle cx="7" cy="6" r="2.2" fill="#878a99"/></svg>
<svg class="a" style="left:1636.00px;top:753.35px" width="14" height="14" viewBox="0 0 14 14" ><circle cx="5.8" cy="5.8" r="4.7" fill="none" stroke="#878a99" stroke-width="1.6"/><path d="M9.2 9.2L12.4 12.4" stroke="#878a99" stroke-width="1.6" stroke-linecap="round"/><circle cx="5.8" cy="5.8" r="2.6" fill="none" stroke="#b4b6c2" stroke-width="0.9"/><circle cx="5.8" cy="5.8" r="1.5" fill="#878a99"/></svg>
<svg class="a" style="left:1666.00px;top:752.55px" width="13" height="13" viewBox="0 0 13 13" ><path d="M1.4 11.9L8.3 5.8" stroke="#878a99" stroke-width="3.3"/><path d="M9.4 4.8L11.1 3.3" stroke="#878a99" stroke-width="3"/></svg>
<svg class="a" style="left:1696.00px;top:753.05px" width="13" height="14" viewBox="0 0 13 14" ><rect x="4.05" y="1.65" width="7.4" height="8" fill="#e6e7ec" stroke="#878a99" stroke-width="1.1"/><rect x="0.8" y="4" width="8.6" height="9" fill="#878a99"/></svg>
<div class="t" style="left:108.40px;top:799.61px;font-size:12.5px;line-height:12.5px;color:#2a2f36;font-weight:400;letter-spacing:0px;-webkit-text-stroke:0.2px #2a2f36;">10</div>
<div class="t" style="left:168.80px;top:799.61px;font-size:12.5px;line-height:12.5px;color:#2a2f36;letter-spacing:0.1px;-webkit-text-stroke:0.2px #2a2f36">2025<span style="font-size:10.6px;letter-spacing:0">RQ</span>1340</div>
<div class="t" style="left:520.60px;top:799.61px;font-size:12.5px;line-height:12.5px;color:#2a2f36;font-weight:400;letter-spacing:0.42px;-webkit-text-stroke:0.2px #2a2f36;">Uploading Price</div>
<div class="t" style="left:872.80px;top:799.61px;font-size:12.5px;line-height:12.5px;color:#2a2f36;font-weight:400;letter-spacing:0.68px;-webkit-text-stroke:0.2px #2a2f36;">29-04-2025</div>
<div class="t" style="left:1067.60px;top:799.61px;font-size:12.5px;line-height:12.5px;color:#2a2f36;font-weight:400;letter-spacing:0.68px;-webkit-text-stroke:0.2px #2a2f36;">29-04-2025</div>
<div class="t" style="left:1224.50px;top:800.62px;font-size:10.6px;line-height:10.6px;color:#30353c;font-weight:400;letter-spacing:-0.05px;-webkit-text-stroke:0.45px #30353c;">PUBLISHED</div>
<svg class="a" style="left:1606.00px;top:799.99px" width="14" height="12" viewBox="0 0 14 12" ><ellipse cx="7" cy="6" rx="6" ry="4.9" fill="none" stroke="#878a99" stroke-width="2.2"/><circle cx="7" cy="6" r="2.2" fill="#878a99"/></svg>
<svg class="a" style="left:1636.00px;top:799.29px" width="14" height="14" viewBox="0 0 14 14" ><circle cx="5.8" cy="5.8" r="4.7" fill="none" stroke="#878a99" stroke-width="1.6"/><path d="M9.2 9.2L12.4 12.4" stroke="#878a99" stroke-width="1.6" stroke-linecap="round"/><circle cx="5.8" cy="5.8" r="2.6" fill="none" stroke="#b4b6c2" stroke-width="0.9"/><circle cx="5.8" cy="5.8" r="1.5" fill="#878a99"/></svg>
<svg class="a" style="left:1666.00px;top:798.49px" width="13" height="13" viewBox="0 0 13 13" ><path d="M1.4 11.9L8.3 5.8" stroke="#878a99" stroke-width="3.3"/><path d="M9.4 4.8L11.1 3.3" stroke="#878a99" stroke-width="3"/></svg>
<svg class="a" style="left:1696.00px;top:798.99px" width="13" height="14" viewBox="0 0 13 14" ><rect x="4.05" y="1.65" width="7.4" height="8" fill="#e6e7ec" stroke="#878a99" stroke-width="1.1"/><rect x="0.8" y="4" width="8.6" height="9" fill="#878a99"/></svg>
<div class="a" style="left:1656.80px;top:352.10px;width:40.20px;height:27.20px;background:#151515;border-radius:4px"></div>
<svg class="a" style="left:1671.50px;top:379.00px" width="9" height="5" viewBox="0 0 9 5" ><path d="M0 0h9L4.5 4.5z" fill="#151515"/></svg>
<div class="t" style="left:1667.40px;top:360.64px;font-size:9.4px;line-height:9.4px;color:#e8e8e8;font-weight:400;letter-spacing:0.35px;-webkit-text-stroke:0.35px #e8e8e8;">Edit</div>
<div class="a" style="left:1652.60px;top:371.90px;width:38.20px;height:38.50px;border:4.8px solid #f28a30;border-radius:11px"></div>
<svg class="a" style="left:1519.00px;top:409.00px" width="140" height="135" viewBox="0 0 140 135" ><path d="M12.5 122.6L96 31L84 23.3L125.7 9.4L111.1 50.4L107 38.6L14.5 124.6z" fill="#f28a30" stroke="#f28a30" stroke-width="1.2" stroke-linejoin="round"/></svg>
<div class="t" style="left:98.70px;top:848.14px;font-size:12px;line-height:12px;color:#3d444b;font-weight:400;letter-spacing:0.12px;-webkit-text-stroke:0.2px #3d444b;">Showing 1 to 10 of 1,378 entries</div>
<div class="a" style="left:1404.40px;top:837.90px;width:349.40px;height:51.10px;border:1px solid #e9ebec;border-radius:4px 4px 0 0;background:#fff"></div>
<div class="a" style="left:1478.00px;top:837.50px;width:29.20px;height:51.50px;background:#405189"></div>
<div class="a" style="left:1536.00px;top:837.90px;width:1.00px;height:51.10px;background:#e9ebec"></div>
<div class="a" style="left:1567.50px;top:837.90px;width:1.00px;height:51.10px;background:#e9ebec"></div>
<div class="a" style="left:1599.50px;top:837.90px;width:1.00px;height:51.10px;background:#e9ebec"></div>
<div class="a" style="left:1630.50px;top:837.90px;width:1.00px;height:51.10px;background:#e9ebec"></div>
<div class="a" style="left:1662.50px;top:837.90px;width:1.00px;height:51.10px;background:#e9ebec"></div>
<div class="a" style="left:1703.70px;top:837.90px;width:1.00px;height:51.10px;background:#e9ebec"></div>
<div class="t" style="left:1416.30px;top:847.64px;font-size:12px;line-height:12px;color:#8a92a6;font-weight:400;letter-spacing:0.4px;">Previous</div>
<div class="t" style="left:1489.40px;top:847.64px;font-size:12px;line-height:12px;color:#fff;font-weight:400;letter-spacing:0px;-webkit-text-stroke:0.3px #fff;">1</div>
<div class="t" style="left:1518.50px;top:847.64px;font-size:12px;line-height:12px;color:#405189;font-weight:400;letter-spacing:0.3px;">2</div>
<div class="t" style="left:1549.30px;top:847.64px;font-size:12px;line-height:12px;color:#405189;font-weight:400;letter-spacing:0.3px;">3</div>
<div class="t" style="left:1580.80px;top:847.64px;font-size:12px;line-height:12px;color:#405189;font-weight:400;letter-spacing:0.3px;">4</div>
<div class="t" style="left:1612.00px;top:847.64px;font-size:12px;line-height:12px;color:#405189;font-weight:400;letter-spacing:0.3px;">5</div>
<div class="t" style="left:1642.50px;top:847.64px;font-size:12px;line-height:12px;color:#405189;font-weight:400;letter-spacing:0.3px;">...</div>
<div class="t" style="left:1673.60px;top:847.64px;font-size:12px;line-height:12px;color:#405189;font-weight:400;letter-spacing:0.3px;">138</div>
<div class="t" style="left:1716.70px;top:847.64px;font-size:12px;line-height:12px;color:#495b8a;font-weight:400;letter-spacing:0.3px;">Next</div>
<div class="a" style="left:1734.00px;top:739.20px;width:46.00px;height:45.80px;background:#299cdb;border-radius:50%;box-shadow:0 2px 6px rgba(0,0,0,.15)"></div>
<svg class="a" style="left:1746.00px;top:751.00px" width="22" height="22" viewBox="0 0 22 22" ><path d="M3.5 4h15v11H7l-3.5 3.3z" fill="none" stroke="#fff" stroke-width="1.6" stroke-linejoin="round"/><circle cx="8" cy="9.5" r="1" fill="#fff"/><circle cx="11" cy="9.5" r="1" fill="#fff"/><circle cx="14" cy="9.5" r="1" fill="#fff"/></svg>
<div class="a" style="left:1731.00px;top:791.60px;width:51.20px;height:51.10px;background:#3b82f6;border-radius:50%;box-shadow:0 2px 6px rgba(0,0,0,.15)"></div>
<svg class="a" style="left:1744.00px;top:804.00px" width="26" height="26" viewBox="0 0 26 26" ><g fill="none" stroke="#fff" stroke-width="1.5"><rect x="4.85" y="7.05" width="17.6" height="15.9" rx="3"/></g><g fill="#fff"><rect x="1.1" y="12.6" width="3.2" height="6.9" rx="0.8"/><rect x="22.9" y="12.6" width="3" height="6.9" rx="0.8"/><circle cx="13.6" cy="2.7" r="1.7"/><rect x="12.9" y="3" width="1.4" height="4.5"/><circle cx="10" cy="13.4" r="1.8"/><circle cx="17.1" cy="13.4" r="1.8"/><rect x="8.2" y="17.3" width="10.9" height="6.4"/></g><g fill="#3b82f6"><rect x="9.5" y="19.6" width="1.7" height="2.6"/><rect x="12.7" y="19.6" width="1.7" height="2.6" opacity=".7"/><rect x="15.9" y="19.6" width="1.7" height="2.6"/></g></svg>
</div>
<div id="track">
<svg class="a" style="left:5px;top:8px" width="12" height="8" viewBox="0 0 12 8"><path d="M0 7.5L6 0.5L12 7.5z" fill="#8a8a8a"/></svg>
<div class="a" style="left:5px;top:25px;width:12px;height:720px;background:#8a8a8a;border-radius:6px"></div>
<svg class="a" style="left:5px;top:841px" width="12" height="8" viewBox="0 0 12 8"><path d="M0 0.5L12 0.5L6 7.5z" fill="#8a8a8a"/></svg>
</div>
</body></html>
